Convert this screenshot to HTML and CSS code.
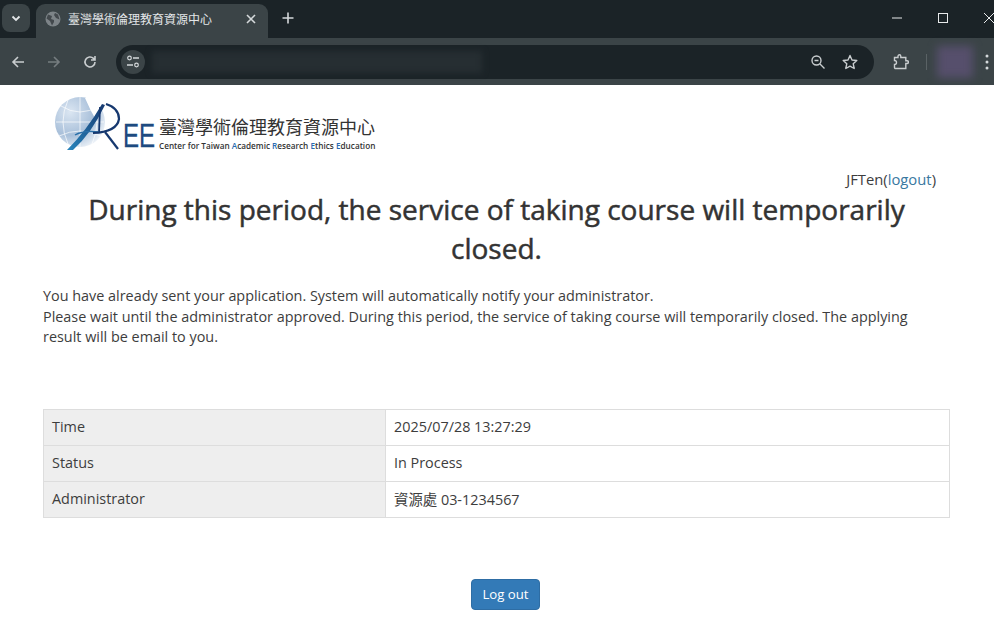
FILE: index.html
```html
<!DOCTYPE html>
<html lang="zh-Hant">
<head>
<meta charset="utf-8">
<title>臺灣學術倫理教育資源中心</title>
<link rel="stylesheet" href="styles.css">
</head>
<body>
<div class="browser">
  <div class="tabstrip">
    <div class="tab-search"><svg width="12" height="12" viewBox="0 0 12 12"><path d="M2.5 4.5 6 8l3.5-3.5" fill="none" stroke="#e3e6e8" stroke-width="1.8"/></svg></div>
    <div class="tab">
      <svg class="globe" width="16" height="16" viewBox="0 0 16 16"><circle cx="8" cy="8" r="7.5" fill="#7d8488"/><path d="M3 3.500 7 5 6 8l3 1 0 2-2 3.500L5 10 1.500 7.500ZM10 2l3 1.500 1.500 5L11 7 9 4Z" fill="#43494d"/></svg>
      <span class="tab-title">臺灣學術倫理教育資源中心</span>
      <svg class="tab-close" width="10" height="10" viewBox="0 0 10 10"><path d="M1 1l8 8M9 1l-8 8" stroke="#d5d9db" stroke-width="1.600"/></svg>
    </div>
    <svg class="new-tab" width="12" height="12" viewBox="0 0 12 12"><path d="M6 .5v11M.5 6h11" stroke="#d5d9db" stroke-width="1.600"/></svg>
    <div class="window-controls">
      <svg width="10" height="10" viewBox="0 0 10 10"><path d="M0 5h10" stroke="#e8eaeb" stroke-width="1"/></svg>
      <svg width="10" height="10" viewBox="0 0 10 10"><rect x=".5" y=".5" width="9" height="9" fill="none" stroke="#e8eaeb"/></svg>
      <svg width="10" height="10" viewBox="0 0 10 10"><path d="M0 0l10 10M10 0 0 10" stroke="#e8eaeb"/></svg>
    </div>
  </div>
  <div class="toolbar">
    <svg class="nav" width="16" height="16" viewBox="0 0 16 16"><path d="M14 8H3M8 3 3 8l5 5" fill="none" stroke="#c9cdcf" stroke-width="1.600"/></svg>
    <svg class="nav" width="16" height="16" viewBox="0 0 16 16"><path d="M2 8h11M8 3l5 5-5 5" fill="none" stroke="#767d80" stroke-width="1.600"/></svg>
    <svg class="nav" width="16" height="16" viewBox="0 0 16 16"><path d="M13 8a5 5 0 1 1-1.500-3.600L13 6M13 2v4H9" fill="none" stroke="#c9cdcf" stroke-width="1.600"/></svg>
    <div class="omnibox">
      <div class="site-info"><svg width="14" height="14" viewBox="0 0 14 14"><circle cx="3.500" cy="3" r="1.800" fill="none" stroke="#d5d9db" stroke-width="1.200"/><path d="M7 3h6M1 10h6" stroke="#d5d9db" stroke-width="1.400"/><circle cx="10.500" cy="10" r="1.800" fill="none" stroke="#d5d9db" stroke-width="1.200"/></svg></div>
      <div class="url-blur"></div>
      <svg class="omni-icon zoom-icon" width="16" height="16" viewBox="0 0 16 16"><circle cx="6.500" cy="6.500" r="4.500" fill="none" stroke="#c9cdcf" stroke-width="1.400"/><path d="M4.500 6.500h4M10 10l4.500 4.500" stroke="#c9cdcf" stroke-width="1.400"/></svg>
      <svg class="omni-icon star-icon" width="16" height="16" viewBox="0 0 16 16"><path d="M8 1.500l2 4.500 4.800.5-3.600 3.200 1 4.800L8 12.200l-4.200 2.300 1-4.800L1.200 6.500 6 6Z" fill="none" stroke="#c9cdcf" stroke-width="1.400" stroke-linejoin="round"/></svg>
    </div>
    <svg class="ext" width="16" height="16" viewBox="0 0 16 16"><path d="M1.500 3.500H5V2.200a1.400 1.400 0 0 1 2.800 0V3.500h5v3.200h1.200a1.400 1.400 0 0 1 0 2.800h-1.200v5H2.500a1 1 0 0 1-1-1V10.500a2 2 0 0 0 0-4Z" fill="none" stroke="#c9cdcf" stroke-width="1.400"/></svg>
    <div class="divider"></div>
    <div class="avatar"></div>
    <svg class="menu" width="4" height="16" viewBox="0 0 4 16"><circle cx="2" cy="2" r="1.500" fill="#d5d9db"/><circle cx="2" cy="8" r="1.500" fill="#d5d9db"/><circle cx="2" cy="14" r="1.500" fill="#d5d9db"/></svg>
  </div>
</div>
<main class="page">
  <div class="brand">
    <svg class="logo" width="106" height="62" viewBox="0 0 106 62" role="img" aria-label="AREE">
      <defs>
        <radialGradient id="gl" cx=".3" cy=".3" r=".85"><stop offset="0" stop-color="#dbe6f2"/><stop offset=".55" stop-color="#a9c0da"/><stop offset=".85" stop-color="#dfe8f2"/><stop offset="1" stop-color="#ffffff"/></radialGradient>
        <linearGradient id="sw" x1="0" y1="1" x2="1" y2="0"><stop offset="0" stop-color="#2a86bd"/><stop offset="1" stop-color="#16386f"/></linearGradient>
      </defs>
      <circle cx="27" cy="30" r="25" fill="url(#gl)"/>
      <path d="M3 30h48M27 5v50M8 14q19 12 38 0M6 44q21-10 42 0M15 8q-10 22 0 44M39 8q10 22 0 44" fill="none" stroke="#fff" stroke-width=".8" opacity=".85"/>
      <path d="M32 6 Q46 3 56 6 L50 12 L42 26 L38 19 Z" fill="#fff"/>
      <path d="M14 58 Q34 38 49 12 L52 13 Q38 42 20 58 Z" fill="url(#sw)"/>
      <path d="M47 15 L46 41" stroke="#16386f" stroke-width="1.800" fill="none"/>
      <path d="M22 43 Q30 38 46 40" stroke="#2a6fa8" stroke-width="1.400" fill="none"/>
      <path d="M53 12 Q66 16 66 27 Q64 40 40 41" stroke="#16386f" stroke-width="2.200" fill="none"/>
      <path d="M52 40 L65 57" stroke="#16386f" stroke-width="2.200" fill="none"/>
      <text class="logo-ee" transform="translate(70 55) scale(.72 1)">EE</text>
    </svg>
    <div class="brand-text">
      <div class="logo-zh">臺灣學術倫理教育資源中心</div>
      <div class="logo-en">Center for Taiwan <span class="hl">A</span>cademic <span class="hl">R</span>esearch <span class="hl">E</span>thics <span class="hl">E</span>ducation</div>
    </div>
  </div>
  <div class="user">JFTen(<a href="#">logout</a>)</div>
  <h1>During this period, the service of taking course will temporarily closed.</h1>
  <p class="notice">You have already sent your application. System will automatically notify your administrator.<br>Please wait until the administrator approved. During this period, the service of taking course will temporarily closed. The applying result will be email to you.</p>
  <table class="info">
    <tr><th>Time</th><td>2025/07/28 13:27:29</td></tr>
    <tr><th>Status</th><td>In Process</td></tr>
    <tr><th>Administrator</th><td>資源處 03-1234567</td></tr>
  </table>
  <div class="actions"><button class="btn" type="button">Log out</button></div>
</main>
</body>
</html>
```
FILE: styles.css
```css
* { box-sizing: border-box; }
html, body { margin: 0; padding: 0; background: #fff; overflow: hidden; }
body { width: 994px; height: 629px; font-family: "Open Sans", "Noto Sans CJK TC", sans-serif; color: #3d3d3d; font-size: 14px; }

.browser { height: 85px; background: #3b4447; }
.tabstrip { height: 38px; background: #1b2327; display: flex; align-items: flex-start; }
.tab-search { width: 28px; height: 28px; margin: 4px 0 0 2px; background: #3b4447; border-radius: 8px; display: flex; align-items: center; justify-content: center; }
.tab { width: 232px; height: 34px; margin: 4px 0 0 6px; background: #3b4447; border-radius: 9px 9px 0 0; display: flex; align-items: center; padding: 0 12px 0 9px; }
.globe { flex: none; margin-top: -4px; }
.tab-title { margin-left: 7px; flex: 1; font-size: 12px; color: #e3e6e8; margin-top: -4px; white-space: nowrap; }
.tab-close { margin-top: -4px; }
.new-tab { margin: 12px 0 0 14px; }
.window-controls { margin-left: auto; display: flex; gap: 36px; padding: 13px 0 0; width: 102px; }
.window-controls svg { flex: none; }
.toolbar { height: 47px; display: flex; align-items: center; padding: 0 0 0 10px; }
.toolbar .nav { margin-right: 20px; flex: none; }
.toolbar .nav:nth-child(3) { margin-right: 18px; }
.omnibox { width: 758px; height: 34px; background: #1b2327; border-radius: 17px; display: flex; align-items: center; padding-left: 5px; flex: none; }
.site-info { width: 24px; height: 24px; border-radius: 12px; background: #3b4447; display: flex; align-items: center; justify-content: center; flex: none; }
.url-blur { width: 330px; height: 22px; margin-left: 7px; background: #262e32; filter: blur(3px); flex: none; }
.omni-icon { flex: none; }
.zoom-icon { margin-left: 328px; }
.star-icon { margin-left: 16px; }
.ext { margin-left: 19px; flex: none; }
.divider { width: 1px; height: 16px; background: #5a6265; margin-left: 17px; flex: none; }
.avatar { width: 36px; height: 32px; margin-left: 10px; background: #564f6c; filter: blur(4px); flex: none; }
.menu { margin-left: 12px; flex: none; }

.page { padding: 7px 44px 0 43px; }
.brand { display: flex; height: 62px; margin-left: 10px; }
.logo { display: block; flex: none; }
.logo-ee { font: 400 33.5px "Liberation Sans", sans-serif; fill: #1d4a80; stroke: #1d4a80; stroke-width: .3px; }
.brand-text { padding-top: 24px; color: #333; white-space: nowrap; }
.logo-zh { font: 400 18px/20px "Noto Sans CJK TC", sans-serif; }
.logo-en { margin-top: 4.8px; font: 600 8.2px/10px "Open Sans", sans-serif; }
.logo-en .hl { color: #2b6cb0; }
.user { text-align: right; padding-right: 14px; margin-top: 15px; line-height: 20px; font-size: 14.8px; }
.user a { color: #39789f; text-decoration: none; }
h1 { margin: 1px 0 0; font-size: 28px; font-weight: 400; -webkit-text-stroke: .5px #333; line-height: 39px; text-align: center; color: #333; }
.notice { margin: 18px 0 0; padding-right: 20px; font-size: 14.4px; line-height: 20.5px; }
.info { width: 907px; margin-top: 61px; border-collapse: collapse; table-layout: fixed; }
.info th, .info td { height: 36px; padding: 0 8px 1px; border: 1px solid #ddd; font-size: 14.4px; font-weight: 400; text-align: left; }
.info th { width: 342px; background: #eee; }
.actions { margin-top: 61px; padding-left: 18px; text-align: center; }
.btn { width: 69px; height: 31px; padding: 0; background: #337ab7; color: #fff; border: 1px solid #2e6da4; border-radius: 4px; font: 400 13.2px "Open Sans", sans-serif; }
```
